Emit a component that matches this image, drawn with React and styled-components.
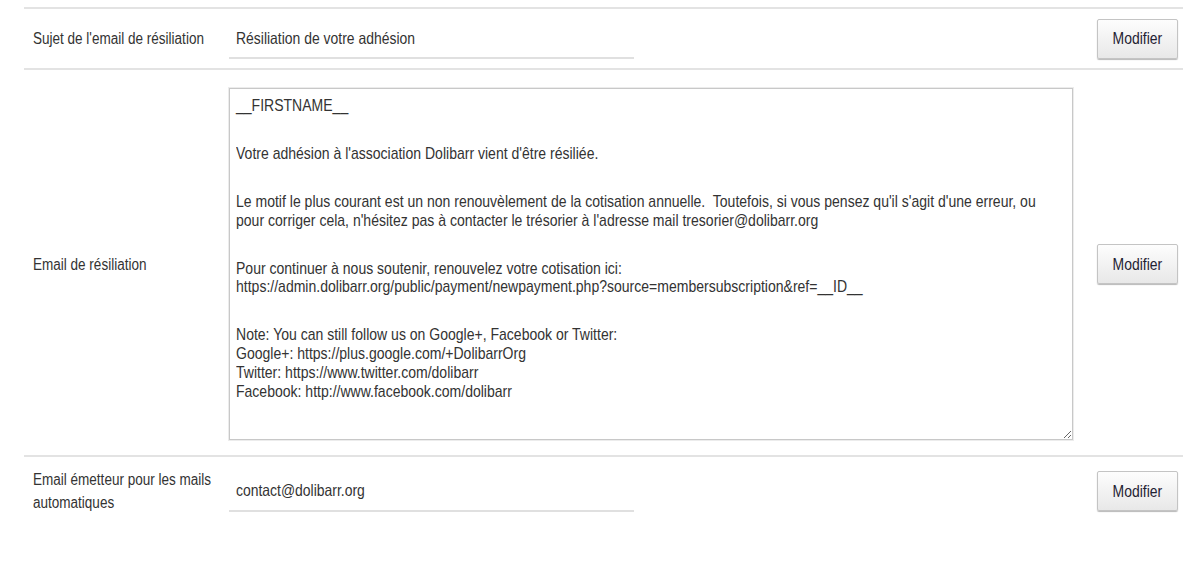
import React from 'react'
import styled, { createGlobalStyle } from 'styled-components'

const GlobalStyle = createGlobalStyle`
  body {
    margin: 0;
    background: #fff;
    font-family: "Liberation Sans", Arial, sans-serif;
    font-size: 16px;
    color: #333;
  }
`

// the reference uses a condensed face; squeeze the regular one to match
const Narrow = styled.span`
  display: inline-block;
  white-space: pre;
  transform: scaleX(0.845);
  transform-origin: ${p => (p.$center ? 'center' : 'left')} center;
`

const Page = styled.div`
  padding: 7px 16px 0 24px;
`

const Table = styled.div`
  border-top: 2px solid #e3e3e3;
  width: 1159px;
`

const Row = styled.div`
  display: grid;
  grid-template-columns: 205px 1fr 92px;
  align-items: center;
  padding: ${p => p.$pad || '9px 0'};
  border-bottom: ${p => (p.$last ? 'none' : '2px solid #e3e3e3')};
`

const Label = styled.div`
  padding: 0 0 0 9px;
  line-height: 23px;
  white-space: nowrap;
`

const Value = styled.div`
  display: flex;
  align-items: center;
`

const Input = styled.div`
  width: 398px;
  height: 38px;
  padding-left: 7px;
  display: flex;
  align-items: center;
  border-bottom: 2px solid #e0e0e0;
  font-size: 16.5px;
  margin-top: 1px;
`

const TextArea = styled.div`
  width: 830px;
  height: 336px;
  padding: 8px 6px 6px;
  border: 1px solid #c8c8c8;
  box-shadow: 0 0 0 1px #ececec;
  font-size: 16.6px;
  line-height: 18.7px;
  resize: both;
  overflow: hidden;
`

const Para = styled.p`
  margin: 0 0 29.3px;
`

const ButtonCell = styled.div`
  display: flex;
  justify-content: flex-end;
  padding-right: 5px;
`

const Button = styled.button`
  width: 81px;
  height: 40px;
  font-family: inherit;
  font-size: 16.5px;
  color: #1f2233;
  background: linear-gradient(to bottom, #fdfdfd, #e8e8e8);
  border: 1px solid #c4c4c4;
  border-radius: 2px;
  box-shadow: 0 1px 1px rgba(0, 0, 0, 0.28);
  padding: 0;
`

const paragraphs = [
  '__FIRSTNAME__',
  "Votre adhésion à l'association Dolibarr vient d'être résiliée.",
  "Le motif le plus courant est un non renouvèlement de la cotisation annuelle.  Toutefois, si vous pensez qu'il s'agit d'une erreur, ou\npour corriger cela, n'hésitez pas à contacter le trésorier à l'adresse mail tresorier@dolibarr.org",
  'Pour continuer à nous soutenir, renouvelez votre cotisation ici:\nhttps://admin.dolibarr.org/public/payment/newpayment.php?source=membersubscription&ref=__ID__',
  'Note: You can still follow us on Google+, Facebook or Twitter:\nGoogle+: https://plus.google.com/+DolibarrOrg\nTwitter: https://www.twitter.com/dolibarr\nFacebook: http://www.facebook.com/dolibarr',
]

const EditButton = () => (
  <ButtonCell>
    <Button>
      <Narrow $center>Modifier</Narrow>
    </Button>
  </ButtonCell>
)

const App = () => {
  return (
    <>
      <GlobalStyle />
      <Page>
        <Table>
          <Row>
            <Label>
              <Narrow>Sujet de l'email de résiliation</Narrow>
            </Label>
            <Value>
              <Input>
                <Narrow>Résiliation de votre adhésion</Narrow>
              </Input>
            </Value>
            <EditButton />
          </Row>
          <Row $pad="18px 0 15px">
            <Label>
              <Narrow>Email de résiliation</Narrow>
            </Label>
            <Value>
              <TextArea>
                {paragraphs.map((p, i) => (
                  <Para key={i}>
                    <Narrow>{p}</Narrow>
                  </Para>
                ))}
              </TextArea>
            </Value>
            <EditButton />
          </Row>
          <Row $last $pad="11px 0">
            <Label>
              <Narrow>{'Email émetteur pour les mails\nautomatiques'}</Narrow>
            </Label>
            <Value>
              <Input>
                <Narrow>contact@dolibarr.org</Narrow>
              </Input>
            </Value>
            <EditButton />
          </Row>
        </Table>
      </Page>
    </>
  )
}

export default App
